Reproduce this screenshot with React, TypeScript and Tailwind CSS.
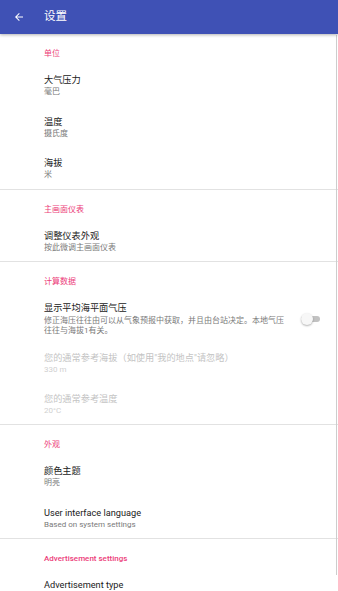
import React from "react";

const font = { fontFamily: "Roboto, 'Noto Sans CJK SC', sans-serif" };

function Category({ label, medium }: { label: string; medium?: boolean }) {
  return (
    <p className={`pl-[44px] pt-[14px] pb-[4px] text-[8px] leading-[12px] text-[#ec407a] ${medium ? "font-medium" : "font-normal"}`}>
      {label}
    </p>
  );
}

function Item({ title, sub, disabled }: { title: string; sub: string; disabled?: boolean }) {
  return (
    <div className={`pl-[44px] pr-4 pt-[9px] ${disabled ? "pb-[8px]" : "pb-[8.5px]"}`}>
      <p className={`text-[9.2px] leading-[13px] ${disabled ? "text-[#c4c4c4]" : "text-[#212121]"}`}>{title}</p>
      <p className={`text-[8px] leading-[11px] ${disabled ? "text-[#d0d0d0]" : "text-[#7a7a7a]"}`}>{sub}</p>
    </div>
  );
}

function Divider() {
  return <div className="h-px bg-[#e2e2e2]" />;
}

export default function App() {
  return (
    <div className="relative w-[338px] h-[591px] overflow-hidden bg-white" style={font}>
      {/* Toolbar */}
      <div className="relative z-10 h-[34px] bg-[#3f51b5] flex items-center shadow-[0_1px_3px_rgba(0,0,0,0.3)]">
        <svg className="ml-[13px] w-[12px] h-[12px]" viewBox="0 0 24 24" fill="#fff">
          <path d="M20 11H7.83l5.59-5.59L12 4l-8 8 8 8 1.41-1.41L7.83 13H20v-2z" />
        </svg>
        <span className="ml-[19px] text-[11.5px] text-white">设置</span>
      </div>

      {/* Units */}
      <Category label="单位" />
      <Item title="大气压力" sub="毫巴" />
      <Item title="温度" sub="摄氏度" />
      <Item title="海拔" sub="米" />
      <Divider />

      {/* Main gauge */}
      <Category label="主画面仪表" />
      <Item title="调整仪表外观" sub="按此微调主画面仪表" />
      <Divider />

      {/* Computed data */}
      <Category label="计算数据" />
      <div className="flex items-center pl-[44px] pt-[9px] pb-[6px]">
        <div className="w-[246px]">
          <p className="text-[9.2px] leading-[13px] text-[#212121]">显示平均海平面气压</p>
          <p className="mt-[2px] text-[8px] leading-[10px] text-[#7a7a7a]">
            修正海压往往由可以从气象预报中获取，并且由台站决定。本地气压往往与海拔1有关。
          </p>
        </div>
        <div className="relative ml-[11px] w-[19px] h-[12px] flex items-center">
          <div className="w-full h-[6px] rounded-full bg-[#c2c2c2]" />
          <div className="absolute left-0 top-0 w-[12px] h-[12px] rounded-full bg-[#f7f7f7] shadow-[0_1px_2px_rgba(0,0,0,0.3)]" />
        </div>
      </div>
      <Item title={'您的通常参考海拔（如使用"我的地点"请忽略）'} sub="330 m" disabled />
      <Item title="您的通常参考温度" sub="20°C" disabled />
      <Divider />

      {/* Appearance */}
      <Category label="外观" />
      <Item title="颜色主题" sub="明亮" />
      <Item title="User interface language" sub="Based on system settings" />
      <Divider />

      {/* Ads */}
      <Category label="Advertisement settings" medium />
      <Item title="Advertisement type" sub="Less relevant for your personalised ads" />

      {/* scrollbar */}
      <div className="absolute right-[1px] top-[35px] w-[1.5px] h-[540px] bg-[#cdcdcd]" />
    </div>
  );
}
